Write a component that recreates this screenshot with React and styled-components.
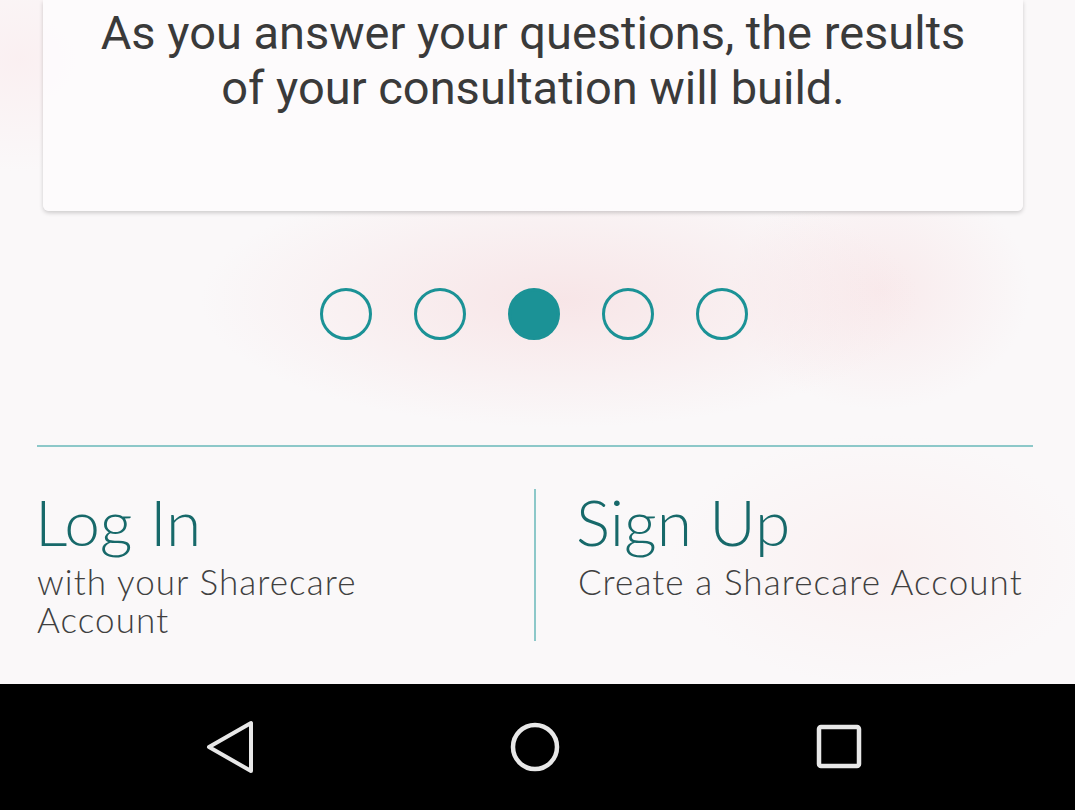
import React from "react";
import styled, { createGlobalStyle } from "styled-components";

const Global = createGlobalStyle`
  html, body { margin: 0; padding: 0; }
  body { font-family: "Lato", "Open Sans", sans-serif; }
`;

const Screen = styled.div`
  width: 1075px;
  height: 810px;
  display: flex;
  flex-direction: column;
  overflow: hidden;
`;

const Content = styled.div`
  height: 684px;
  display: flex;
  flex-direction: column;
  background:
    radial-gradient(ellipse 480px 170px at 560px 300px, rgba(247, 226, 228, 0.85), rgba(247, 226, 228, 0) 75%),
    radial-gradient(ellipse 200px 160px at 880px 290px, rgba(248, 228, 230, 0.7), rgba(248, 228, 230, 0) 75%),
    radial-gradient(ellipse 300px 180px at 880px 560px, rgba(250, 234, 234, 0.5), rgba(250, 234, 234, 0) 70%),
    radial-gradient(ellipse 200px 160px at 20px 60px, rgba(250, 234, 236, 0.6), rgba(250, 234, 236, 0) 70%),
    #faf8f9;
`;

const Card = styled.div`
  margin: 0 52px 0 43px;
  height: 211px;
  box-sizing: border-box;
  padding-top: 5px;
  background: rgba(253, 251, 252, 0.93);
  border-radius: 0 0 6px 6px;
  box-shadow: 0 2px 4px rgba(0, 0, 0, 0.18);
  text-align: center;
  font-family: "Roboto", sans-serif;
  font-size: 47px;
  line-height: 55px;
  color: #3a3a3a;
`;

const Dots = styled.div`
  margin-top: 77px;
  display: flex;
  justify-content: center;
  gap: 42px;
  padding-right: 8px;
`;

const Dot = styled.span`
  width: 52px;
  height: 52px;
  box-sizing: border-box;
  border-radius: 50%;
  border: 3px solid #1b9296;
  background: ${(p) => (p.$active ? "#1b9296" : "transparent")};
`;

const Rule = styled.div`
  margin: 105px 42px 0 37px;
  height: 2px;
  background: #8cc8c9;
`;

const Actions = styled.div`
  margin: 42px 42px 0 37px;
  display: grid;
  grid-template-columns: 497px 1fr;
`;

const Action = styled.div`
  height: 152px;
  padding-left: ${(p) => (p.$divided ? "42px" : "0")};
  border-left: ${(p) => (p.$divided ? "2px solid #8cc8c9" : "none")};
`;

const ActionTitle = styled.div`
  font-size: 64px;
  font-weight: 300;
  line-height: 70px;
  color: #17696a;
  margin-top: -2px;
  margin-left: -2px;
`;

const ActionText = styled.div`
  font-size: 35px;
  font-weight: 300;
  letter-spacing: 1.1px;
  line-height: 38px;
  color: #404040;
  margin-top: 5px;
`;

const NavBar = styled.div`
  flex: 1;
  background: #000;
  display: grid;
  grid-template-columns: 1fr 1fr 1fr;
  align-items: center;
  justify-items: center;
  padding: 0 80px;
`;

const NavIcon = styled.svg`
  display: block;
  margin-left: ${(p) => p.$shift || 0}px;
`;

export default function App() {
  return (
    <Screen>
      <Global />
      <Content>
        <Card>
          As you answer your questions, the results
          <br />
          of your consultation will build.
        </Card>
        <Dots>
          <Dot />
          <Dot />
          <Dot $active />
          <Dot />
          <Dot />
        </Dots>
        <Rule />
        <Actions>
          <Action>
            <ActionTitle>Log In</ActionTitle>
            <ActionText>
              with your Sharecare
              <br />
              Account
            </ActionText>
          </Action>
          <Action $divided>
            <ActionTitle>Sign Up</ActionTitle>
            <ActionText>Create a Sharecare Account</ActionText>
          </Action>
        </Actions>
      </Content>
      <NavBar>
        <NavIcon $shift={-2} width="56" height="56" viewBox="0 0 56 56">
          <path d="M47 4 L47 52 L5 28 Z" fill="none" stroke="#e8e8e8" strokeWidth="4" strokeLinejoin="round" />
        </NavIcon>
        <NavIcon $shift={-6} width="56" height="56" viewBox="0 0 56 56">
          <circle cx="28" cy="28" r="22" fill="none" stroke="#e8e8e8" strokeWidth="4.5" />
        </NavIcon>
        <NavIcon $shift={-8} width="56" height="56" viewBox="0 0 56 56">
          <rect x="8" y="8" width="40" height="39" rx="2" fill="none" stroke="#e8e8e8" strokeWidth="4.5" />
        </NavIcon>
      </NavBar>
    </Screen>
  );
}
